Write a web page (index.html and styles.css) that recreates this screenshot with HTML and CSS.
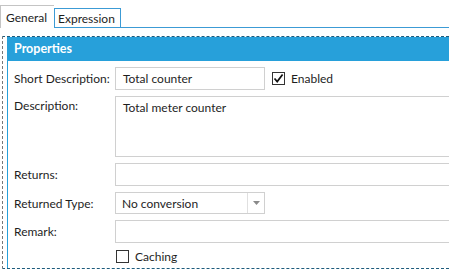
FILE: index.html
```html
<!DOCTYPE html>
<html lang="en">
<head>
  <meta charset="UTF-8" />
  <title>Properties</title>
  <link rel="stylesheet" href="styles.css">
</head>
<body>
  <div class="tabs">
    <div class="tab active">General</div>
    <div class="tab">Expression</div>
    <div class="tab-fill"></div>
  </div>

  <div class="focus">
    <div class="panel">
      <div class="panel-head">Properties</div>
      <div class="form">
        <label class="lbl">Short Description:</label>
        <div class="inline">
          <div class="field short">Total counter</div>
          <div class="check on"><span class="box"><svg width="11" height="11" viewBox="0 0 11 11"><path d="M1.5 5.5 L4.2 8.6 L9.6 1.4" fill="none" stroke="#111" stroke-width="1.7"/></svg></span>Enabled</div>
        </div>

        <label class="lbl top">Description:</label>
        <div class="field wide area">Total meter counter</div>

        <label class="lbl">Returns:</label>
        <div class="field wide"></div>

        <label class="lbl">Returned Type:</label>
        <div class="combo">
          <span class="combo-text">No conversion</span>
          <span class="combo-btn"><svg width="7" height="4" viewBox="0 0 7 4"><path d="M0 0 H7 L3.5 4 Z" fill="#8a8a8a"/></svg></span>
        </div>

        <label class="lbl">Remark:</label>
        <div class="field wide"></div>

        <span></span>
        <div class="check"><span class="box"></span>Caching</div>
      </div>
    </div>
  </div>
</body>
</html>
```

FILE: styles.css
```css
html, body { margin: 0; overflow: hidden; }
body { font-family: Lato, "Open Sans", sans-serif; font-size: 12px; color: #1e1e1e; background: #fff; width: 449px; height: 273px; }

.tabs { display: flex; align-items: flex-end; height: 28px; }
.tab { box-sizing: border-box; line-height: 17px; }
.tab.active { width: 54px; height: 23px; padding: 3px 0 0 5px; border-top: 1px solid #c4c4c4; border-left: 1px solid #c4c4c4; }
.tab:not(.active) { width: 67px; height: 20px; padding: 1px 0 0 3px; border: 1px solid #3c9bd5; }
.tab-fill { flex: 1; border-bottom: 1px solid #3c9bd5; }

/* focus rectangle runs off the right edge, so no right border */
.focus { margin: 8px 0 0 2px; height: 233px; border: 1px dashed #1d5b7c; border-left-color: #777; border-right: 0; padding-left: 4px; box-sizing: border-box; }
.panel { height: 100%; border-left: 1px solid #27a0da; }
.panel-head { height: 24px; line-height: 24px; background: #27a0da; color: #fff; font-weight: bold; font-size: 12.5px; padding-left: 6px; }

.form { display: grid; grid-template-columns: 101px 1fr; row-gap: 6px; padding: 6px 0 0 6px; align-items: center; }
.lbl { white-space: nowrap; }
.lbl.top { align-self: start; padding-top: 2px; }

.field { box-sizing: border-box; height: 23px; border: 1px solid #d0d0d0; padding: 0 7px; line-height: 21px; background: #fff; }
.field.wide { border-right: 0; }
.field.short { width: 150px; }
.field.area { height: 61px; padding-top: 2px; line-height: 17px; }

.inline { display: flex; align-items: center; gap: 7px; }

.check { display: flex; align-items: center; gap: 6px; height: 15px; margin-left: 1px; }
.inline .check { margin-left: 0; }
.box { box-sizing: border-box; width: 13px; height: 13px; border: 1px solid #333; background: #fff; display: flex; align-items: center; justify-content: center; }

.combo { box-sizing: border-box; width: 150px; height: 22px; border: 1px solid #d0d0d0; display: flex; align-items: center; }
.combo-text { flex: 1; padding-left: 6px; }
.combo-btn { width: 16px; height: 100%; border-left: 1px solid #e0e0e0; display: flex; align-items: center; justify-content: center; }
```
